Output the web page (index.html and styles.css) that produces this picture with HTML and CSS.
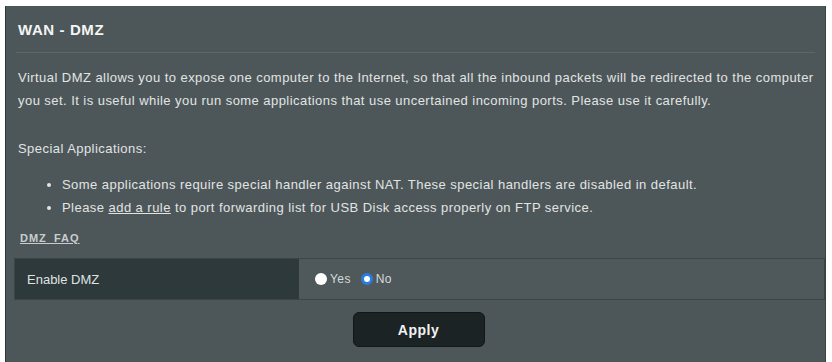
FILE: index.html
```html
<!DOCTYPE html>
<html>
<head>
<meta charset="utf-8">
<link rel="stylesheet" href="styles.css">
</head>
<body>
<div class="panel">
  <div class="title">WAN - DMZ</div>
  <div class="desc">Virtual DMZ allows you to expose one computer to the Internet, so that all the inbound packets will be redirected to the computer you set. It is useful while you run some applications that use uncertained incoming ports. Please use it carefully.</div>
  <div class="special">Special Applications:</div>
  <ul class="bullets">
    <li>Some applications require special handler against NAT. These special handlers are disabled in default.</li>
    <li>Please <a class="link" href="#">add a rule</a> to port forwarding list for USB Disk access properly on FTP service.</li>
  </ul>
  <div class="faq"><a class="link" href="#">DMZ_FAQ</a></div>
  <div class="table">
    <div class="th">Enable DMZ</div>
    <div class="td">
      <label class="radio"><span class="dot dot-off"></span>Yes</label>
      <label class="radio"><span class="dot dot-on"></span>No</label>
    </div>
  </div>
  <div class="actions"><button class="apply">Apply</button></div>
</div>
</body>
</html>
```
FILE: styles.css
```css
html, body {
  margin: 0;
  padding: 0;
  background: #ffffff;
  height: 362px;
  overflow: hidden;
}
body {
  font-family: "Liberation Sans", Arial, sans-serif;
  color: #e2e4e4;
}
.panel {
  margin: 6px 0 0 5px;
  width: 821px;
  height: 356px;
  background: #4d5759;
  border-left: 1px solid #2f3638;
  border-right: 1px solid #3a4244;
  box-sizing: border-box;
}
.title {
  margin: 0 10px;
  padding: 16px 0 14px 2px;
  line-height: 16px;
  font-size: 15px;
  letter-spacing: 0.6px;
  font-weight: bold;
  color: #f4f4f4;
  border-bottom: 1px solid #5d6769;
}
.desc {
  margin: 13px 8px 0 12px;
  font-size: 13px;
  letter-spacing: 0.45px;
  line-height: 23px;
}
.special {
  margin: 25px 12px 0 12px;
  font-size: 13px;
  letter-spacing: 0.45px;
  line-height: 23px;
}
.bullets {
  margin: 13px 0 0 0;
  padding: 0 0 0 56px;
  font-size: 13px;
  letter-spacing: 0.45px;
  line-height: 23px;
}
.link {
  color: #e2e4e4;
  text-decoration: underline;
}
.faq {
  margin: 10px 12px 0 14px;
  font-size: 11px;
  letter-spacing: 1px;
  line-height: 18px;
  font-weight: bold;
}
.faq .link {
  color: #c9cdcd;
}
.table {
  display: flex;
  margin: 11px 0 0 8px;
  height: 42px;
  border: 1px solid #3b4446;
  box-sizing: border-box;
}
.th {
  width: 284px;
  box-sizing: border-box;
  background: #2e393b;
  padding-left: 12px;
  display: flex;
  align-items: center;
  font-size: 13px;
  color: #dfe2e2;
}
.td {
  flex: 1;
  background: #4f595c;
  display: flex;
  align-items: center;
  padding-left: 16px;
  gap: 10px;
  font-size: 12px;
  letter-spacing: 0.4px;
  color: #d6dada;
}
.radio {
  display: flex;
  align-items: center;
  gap: 3px;
}
.dot {
  width: 12px;
  height: 12px;
  border-radius: 50%;
  box-sizing: border-box;
  display: inline-block;
}
.dot-off {
  background: #ffffff;
}
.dot-on {
  background: #ffffff;
  border: 3px solid #2a7de0;
}
.actions {
  display: flex;
  justify-content: center;
  padding: 12px 0 0 6px;
}
.apply {
  width: 132px;
  height: 35px;
  background: #1c2325;
  border: 1px solid #121718;
  border-radius: 6px;
  color: #f2f2f2;
  font-family: "Liberation Sans", Arial, sans-serif;
  font-weight: bold;
  font-size: 14px;
  letter-spacing: 0.5px;
}
```
